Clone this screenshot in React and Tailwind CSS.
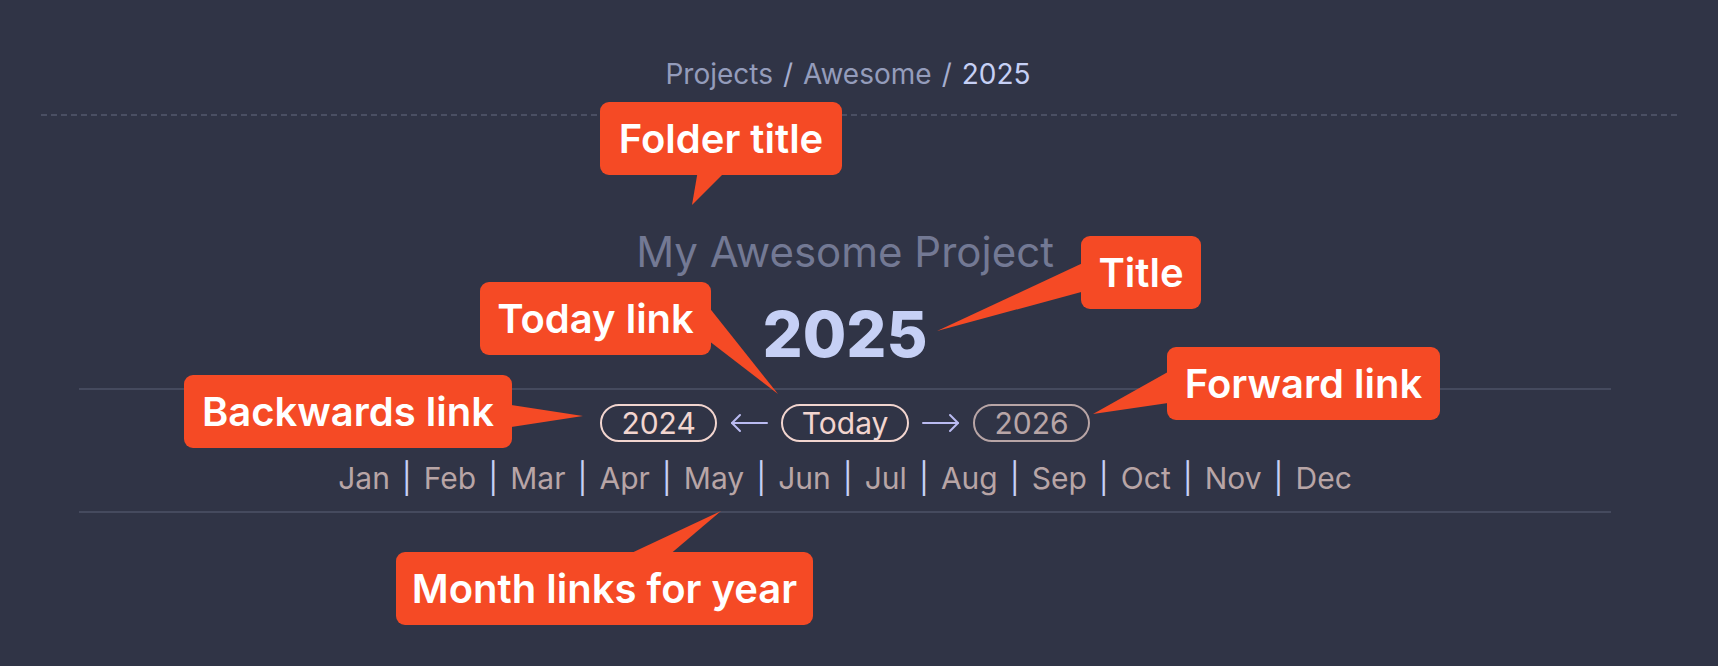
import React from 'react';

const months = ['Jan', 'Feb', 'Mar', 'Apr', 'May', 'Jun', 'Jul', 'Aug', 'Sep', 'Oct', 'Nov', 'Dec'];

// annotation boxes laid over the page
const callouts = [
  { text: 'Folder title', cls: 'left-[600px] top-[102px] w-[242px]' },
  { text: 'Title', cls: 'left-[1081px] top-[236px] w-[120px]' },
  { text: 'Today link', cls: 'left-[480px] top-[282px] w-[231px]' },
  { text: 'Backwards link', cls: 'left-[184px] top-[375px] w-[328px]' },
  { text: 'Forward link', cls: 'left-[1167px] top-[347px] w-[273px]' },
  { text: 'Month links for year', cls: 'left-[396px] top-[552px] w-[417px]' },
];

function Pill({ children, dim }) {
  return (
    <span
      className={
        'inline-flex h-[38px] items-center rounded-full border-2 px-[19px] text-[30px] leading-none ' +
        (dim ? 'border-[#b8a5a6] text-[#b8a5a6]' : 'border-[#f2d5cf] text-[#f2d5cf]')
      }
    >
      {children}
    </span>
  );
}

function Arrow({ left }) {
  return (
    <svg width="40" height="22" viewBox="0 0 40 22" fill="none" stroke="#babbf1" strokeWidth="2" strokeLinecap="round" strokeLinejoin="round">
      {left ? (
        <>
          <path d="M3 11h35" />
          <path d="M11 3l-8 8 8 8" />
        </>
      ) : (
        <>
          <path d="M2 11h35" />
          <path d="M29 3l8 8-8 8" />
        </>
      )}
    </svg>
  );
}

export default function App() {
  return (
    <div
      className="relative h-[666px] w-full overflow-hidden bg-[#303446]"
      style={{ fontFamily: 'Inter, "Noto Sans", sans-serif' }}
    >
      <div className="px-[41px] pt-[56px]">
        {/* breadcrumb */}
        <div className="flex justify-center pr-[22px] text-[28px] leading-[36px]">
          <span className="text-[#949cbb]">Projects</span>
          <span className="mx-[10px] text-[#a5adce]">/</span>
          <span className="text-[#949cbb]">Awesome</span>
          <span className="mx-[10px] text-[#a5adce]">/</span>
          <span className="text-[#c6d0f5]">2025</span>
        </div>
        <div className="mt-[22px] h-[2px] bg-[repeating-linear-gradient(90deg,#4a4f63_0_6px,transparent_6px_10px)]" />
      </div>

      <div className="ml-[79px] w-[1532px]">
        <div className="mt-[112px] text-center text-[42px] leading-[48px] text-[#737994]">My Awesome Project</div>
        <div className="mt-[26px] text-center text-[63px] font-extrabold leading-[64px] text-[#c6d0f5]">2025</div>

        <div className="mt-[22px] h-[2px] bg-[#454a5e]" />

        {/* navigation */}
        <div className="mt-[14px] flex items-center justify-center gap-[12px]">
          <Pill>2024</Pill>
          <Arrow left />
          <Pill>Today</Pill>
          <Arrow />
          <Pill dim>2026</Pill>
        </div>

        {/* months */}
        <div className="mt-[17px] flex items-center justify-center text-[30px] leading-[38px]">
          {months.map((m, i) => (
            <React.Fragment key={m}>
              {i > 0 && <span className="mx-[12px] text-[#c6d0f5]">|</span>}
              <span className="text-[#b8a5a6]">{m}</span>
            </React.Fragment>
          ))}
        </div>

        <div className="mt-[14px] h-[2px] bg-[#454a5e]" />
      </div>

      {/* callout tails */}
      <svg className="pointer-events-none absolute left-0 top-0" width="1718" height="666">
        <g fill="#f54a25">
          <polygon points="698,170 727,170 692,205" />
          <polygon points="1085,262 1085,291 937,331" />
          <polygon points="700,296 778,394 700,334" />
          <polygon points="505,404 583,416 505,428" />
          <polygon points="1175,368 1093,414 1175,402" />
          <polygon points="625,556 721,511 668,556" />
        </g>
      </svg>

      {callouts.map((c) => (
        <div
          key={c.text}
          className={
            'absolute flex h-[73px] items-center justify-center rounded-[9px] bg-[#f54a25] text-[40px] font-semibold text-white ' +
            c.cls
          }
        >
          {c.text}
        </div>
      ))}
    </div>
  );
}
